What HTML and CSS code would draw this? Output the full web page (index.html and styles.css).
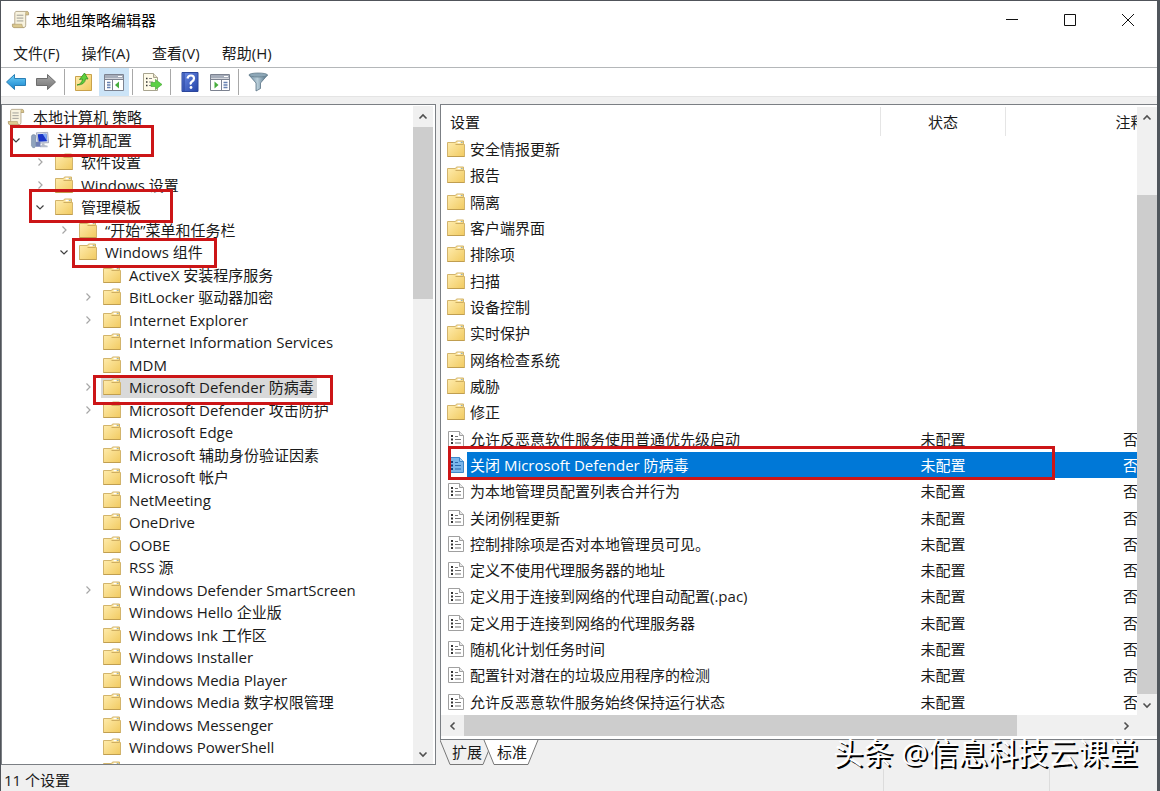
FILE: index.html
```
<!DOCTYPE html>
<html lang="zh-CN">
<head>
  <meta charset="UTF-8">
  <meta name="viewport" content="width=device-width, initial-scale=1.0">
  <title>本地组策略编辑器</title>
  <link rel="stylesheet" href="styles.css">
</head>
<body>

  <!-- shared icons -->
  <svg class="defs" width="0" height="0" aria-hidden="true">
    <defs>
      <linearGradient id="gFolder" x1="0" y1="0" x2="1" y2="1">
        <stop offset="0" stop-color="#ffedb0"/><stop offset="1" stop-color="#f1ca60"/>
      </linearGradient>
      <linearGradient id="gBlue" x1="0" y1="0" x2="0" y2="1">
        <stop offset="0" stop-color="#6fd0f8"/><stop offset="1" stop-color="#1482cc"/>
      </linearGradient>
      <linearGradient id="gGray" x1="0" y1="0" x2="0" y2="1">
        <stop offset="0" stop-color="#aaa"/><stop offset="1" stop-color="#747474"/>
      </linearGradient>
      <linearGradient id="gHelp" x1="0" y1="0" x2="1" y2="1">
        <stop offset="0" stop-color="#6b8be6"/><stop offset="1" stop-color="#2444a8"/>
      </linearGradient>
      <linearGradient id="gFunnel" x1="0" y1="0" x2="1" y2="0">
        <stop offset="0" stop-color="#6d8da3"/><stop offset=".45" stop-color="#b9ced9"/><stop offset="1" stop-color="#4c6c83"/>
      </linearGradient>
    </defs>
    <symbol id="folder" viewBox="0 0 18 18">
      <path d="M.5 2.500H8.500L9.500 1H16.500V4.500H17.500V16.500H.5Z" fill="url(#gFolder)" stroke="#d2b46c"/>
      <path d="M10.500 2.500H13.500" stroke="#fff" stroke-width="1.500"/>
      <path d="M14 2.500H15.500" stroke="#8fb3c9"/>
      <path d="M8.500 4.500H16.500" stroke="#cfae60"/>
      <path d="M.5 16.500H17.500" stroke="#c09e50"/>
    </symbol>
    <symbol id="scroll" viewBox="0 0 20 20">
      <path d="M5 1.500H16.500Q18.500 1.500 18.500 3.500V5H15.500V16Q15.500 18.500 13.500 18.500H3Q1.500 18.500 1.500 16.500V15H4V3Z" fill="#f8f3df" stroke="#b4a88c"/>
      <path d="M15.500 5V3Q15.500 1.500 17 1.500Q18.500 2 18.500 5ZM1.500 15H11.500Q11.500 18.500 13.500 18.500H3Q1.500 18 1.500 15Z" fill="#dbc990" stroke="#b4a070" stroke-width=".7"/>
      <path d="M6 5.500H13M6 8.500H13M6 11.500H13" stroke="#9a9a94"/>
    </symbol>
    <symbol id="computer" viewBox="0 0 20 20">
      <path d="M6 2L18.500 1.500L19.500 13L8 13.500Z" fill="#dfe4ee" stroke="#8a93a8" stroke-width=".8"/>
      <path d="M7.500 3.500L17 3L18 11.500L8.500 12Z" fill="#1935c8"/>
      <path d="M13 3.200L17 3L18 11.500Z" fill="#7fa8f4"/>
      <path d="M12 13.500H15V15.500L18.500 16.500V18H10V16.500L12 15.500Z" fill="#b7bdc9"/>
      <path d="M.5 6Q.5 4 3 4T5.500 6V16.500L4 18.500H2L.5 16.500Z" fill="#8fa3bd" stroke="#70819c" stroke-width=".6"/>
      <path d="M5.500 12H10.500V17.500H5.500Z" fill="#6f7fb4"/>
    </symbol>
    <symbol id="doc" viewBox="0 0 18 18">
      <path d="M1.500 1.500H12.500L16.500 5.500V16.500H1.500Z" class="doc-page"/>
      <path d="M12.500 1.500V5.500H16.500" class="doc-fold"/>
      <path d="M4 5H6V7H4ZM4 8.500H6V10.500H4ZM4 12H6V14H4Z" class="doc-dot"/>
      <path d="M8 6.500H11M8 9.500H14M8 13H14" class="doc-line"/>
    </symbol>
    <symbol id="up" viewBox="0 0 10 10"><path d="M1.500 6.500L5 3L8.500 6.500"/></symbol>
    <symbol id="down" viewBox="0 0 10 10"><path d="M1.500 3.500L5 7L8.500 3.500"/></symbol>
    <symbol id="left" viewBox="0 0 10 10"><path d="M6.500 1.500L3 5L6.500 8.500"/></symbol>
    <symbol id="right" viewBox="0 0 10 10"><path d="M3.500 1.500L7 5L3.500 8.500"/></symbol>
  </svg>

  <div class="window">
    <header class="titlebar">
      <svg class="app-icon"><use href="#scroll"/></svg>
      <h1 class="title">本地组策略编辑器</h1>
      <div class="caption">
        <button type="button" aria-label="最小化"><svg viewBox="0 0 14 14"><path d="M1 6.500H13"/></svg></button>
        <button type="button" aria-label="最大化"><svg viewBox="0 0 14 14"><path d="M1.500 1.500H12.500V12.500H1.500Z"/></svg></button>
        <button type="button" aria-label="关闭"><svg viewBox="0 0 14 14"><path d="M1 1L13 13M13 1L1 13"/></svg></button>
      </div>
    </header>

    <nav class="menubar">
      <button type="button">文件(F)</button>
      <button type="button">操作(A)</button>
      <button type="button">查看(V)</button>
      <button type="button">帮助(H)</button>
    </nav>

    <div class="toolbar">
      <button type="button" aria-label="后退"><svg viewBox="0 0 22 20"><path d="M1.500 10L9.500 2.500V6.500H20.500V13.500H9.500V17.500Z" fill="url(#gBlue)" stroke="#2b7fb5"/></svg></button>
      <button type="button" aria-label="前进"><svg viewBox="0 0 22 20"><path d="M20.500 10L12.500 2.500V6.500H1.500V13.500H12.500V17.500Z" fill="url(#gGray)" stroke="#6d6d6d"/></svg></button>
      <span class="sep"></span>
      <button type="button" aria-label="上一级"><svg viewBox="0 0 22 20"><path d="M2.500 4.500H10L12 2.500H18.500V18.500H2.500Z" fill="url(#gFolder)" stroke="#c9a24c"/><path d="M4 13Q9 12 9.500 7L6.500 7.500L11.500 1L15 7L12.500 6.800Q12 13 4 13Z" fill="#5fd03c" stroke="#2f8f24" stroke-width=".8"/></svg></button>
      <button type="button" class="active" aria-label="显示控制台树"><svg viewBox="0 0 22 20"><path d="M1.500 2.500H20.500V18.500H1.500Z" fill="#fff" stroke="#7c8290"/><path d="M2 3H20V6.500H2Z" fill="#a6adba"/><path d="M15 4.500H19" stroke="#fff"/><path d="M9.500 7V18M2 7.500H20" stroke="#7c8290"/><path d="M4 10.500H7.500M4 13H7.500M4 15.500H7.500" stroke="#6680b0" stroke-width="1.500"/><path d="M16 9.500V16.500L12 13Z" fill="#46ad3c"/></svg></button>
      <span class="sep"></span>
      <button type="button" aria-label="导出列表"><svg viewBox="0 0 22 20"><path d="M2.500 1.500H12.500L16.500 5.500V18.500H2.500Z" fill="#fffbe9" stroke="#a8a48f"/><path d="M12.500 1.500V5.500H16.500" fill="#e6e0c8" stroke="#a8a48f"/><path d="M5 6.500H6.500M5 10H6.500M5 13.500H6.500" stroke="#333" stroke-width="1.500"/><path d="M8 6.500H11M8 10H12M8 13.500H12" stroke="#888"/><path d="M10 10.500H14.500V7.500L21 12.500L14.500 17.500V14.500H10Z" fill="#5bd142" stroke="#4aa83c" stroke-width=".7"/></svg></button>
      <span class="sep"></span>
      <button type="button" aria-label="帮助"><svg viewBox="0 0 22 20"><path d="M3 .5H19V19.500H3Z" fill="url(#gHelp)" stroke="#2b469c"/><path d="M5 1V19" stroke="#26429c"/><path d="M8.500 6.500Q9 3.500 12 3.500T15 6.500Q15 8.300 13 9.500T12 12.500" fill="none" stroke="#fff" stroke-width="2.200"/><circle cx="12" cy="15.500" r="1.400" fill="#fff"/></svg></button>
      <button type="button" aria-label="显示操作窗格"><svg viewBox="0 0 22 20"><path d="M1.500 2.500H20.500V18.500H1.500Z" fill="#fff" stroke="#7c8290"/><path d="M2 3H20V6.500H2Z" fill="#a6adba"/><path d="M15 4.500H19" stroke="#fff"/><path d="M12.500 7V18M2 7.500H20" stroke="#7c8290"/><path d="M14.500 10.500H18.500M14.500 13H18.500M14.500 15.500H18.500" stroke="#6680b0" stroke-width="1.500"/><path d="M5.500 9.500V16.500L9.500 13Z" fill="#46ad3c"/></svg></button>
      <span class="sep"></span>
      <button type="button" aria-label="筛选"><svg viewBox="0 0 22 20"><path d="M2 3L9 11V19L13.500 16.500V11L20.500 3Z" fill="url(#gFunnel)" stroke="#5b7485" stroke-width=".8"/><ellipse cx="11.200" cy="3" rx="9.300" ry="2" fill="#8da7b7" stroke="#647d8d" stroke-width=".8"/></svg></button>
    </div>

    <main class="panes">
      <section class="pane tree-pane">
        <ul class="tree">
          <li class="l0"><span class="node"><svg class="icon"><use href="#scroll"/></svg>本地计算机 策略</span></li>
          <li class="l1"><svg class="chev open"><use href="#down"/></svg><span class="node"><svg class="icon"><use href="#computer"/></svg>计算机配置</span></li>
          <li class="l2"><svg class="chev"><use href="#right"/></svg><span class="node"><svg class="icon"><use href="#folder"/></svg>软件设置</span></li>
          <li class="l2"><svg class="chev"><use href="#right"/></svg><span class="node"><svg class="icon"><use href="#folder"/></svg>Windows 设置</span></li>
          <li class="l2"><svg class="chev open"><use href="#down"/></svg><span class="node"><svg class="icon"><use href="#folder"/></svg>管理模板</span></li>
          <li class="l3"><svg class="chev"><use href="#right"/></svg><span class="node"><svg class="icon"><use href="#folder"/></svg>“开始”菜单和任务栏</span></li>
          <li class="l3"><svg class="chev open"><use href="#down"/></svg><span class="node"><svg class="icon"><use href="#folder"/></svg>Windows 组件</span></li>
          <li class="l4"><span class="node"><svg class="icon"><use href="#folder"/></svg>ActiveX 安装程序服务</span></li>
          <li class="l4"><svg class="chev"><use href="#right"/></svg><span class="node"><svg class="icon"><use href="#folder"/></svg>BitLocker 驱动器加密</span></li>
          <li class="l4"><svg class="chev"><use href="#right"/></svg><span class="node"><svg class="icon"><use href="#folder"/></svg>Internet Explorer</span></li>
          <li class="l4"><span class="node"><svg class="icon"><use href="#folder"/></svg>Internet Information Services</span></li>
          <li class="l4"><span class="node"><svg class="icon"><use href="#folder"/></svg>MDM</span></li>
          <li class="l4"><svg class="chev"><use href="#right"/></svg><span class="node selected"><svg class="icon"><use href="#folder"/></svg>Microsoft Defender 防病毒</span></li>
          <li class="l4"><svg class="chev"><use href="#right"/></svg><span class="node"><svg class="icon"><use href="#folder"/></svg>Microsoft Defender 攻击防护</span></li>
          <li class="l4"><span class="node"><svg class="icon"><use href="#folder"/></svg>Microsoft Edge</span></li>
          <li class="l4"><span class="node"><svg class="icon"><use href="#folder"/></svg>Microsoft 辅助身份验证因素</span></li>
          <li class="l4"><span class="node"><svg class="icon"><use href="#folder"/></svg>Microsoft 帐户</span></li>
          <li class="l4"><span class="node"><svg class="icon"><use href="#folder"/></svg>NetMeeting</span></li>
          <li class="l4"><span class="node"><svg class="icon"><use href="#folder"/></svg>OneDrive</span></li>
          <li class="l4"><span class="node"><svg class="icon"><use href="#folder"/></svg>OOBE</span></li>
          <li class="l4"><span class="node"><svg class="icon"><use href="#folder"/></svg>RSS 源</span></li>
          <li class="l4"><svg class="chev"><use href="#right"/></svg><span class="node"><svg class="icon"><use href="#folder"/></svg>Windows Defender SmartScreen</span></li>
          <li class="l4"><span class="node"><svg class="icon"><use href="#folder"/></svg>Windows Hello 企业版</span></li>
          <li class="l4"><span class="node"><svg class="icon"><use href="#folder"/></svg>Windows Ink 工作区</span></li>
          <li class="l4"><span class="node"><svg class="icon"><use href="#folder"/></svg>Windows Installer</span></li>
          <li class="l4"><span class="node"><svg class="icon"><use href="#folder"/></svg>Windows Media Player</span></li>
          <li class="l4"><span class="node"><svg class="icon"><use href="#folder"/></svg>Windows Media 数字权限管理</span></li>
          <li class="l4"><span class="node"><svg class="icon"><use href="#folder"/></svg>Windows Messenger</span></li>
          <li class="l4"><span class="node"><svg class="icon"><use href="#folder"/></svg>Windows PowerShell</span></li>
          <li class="l4"><span class="node"><svg class="icon"><use href="#folder"/></svg></span></li>
        </ul>
        <div class="vscroll">
          <button type="button" aria-label="向上滚动"><svg><use href="#up"/></svg></button>
          <div class="track"><div class="thumb"></div></div>
          <button type="button" aria-label="向下滚动"><svg><use href="#down"/></svg></button>
        </div>
        <span class="mark mark-computer"></span>
        <span class="mark mark-templates"></span>
        <span class="mark mark-components"></span>
        <span class="mark mark-defender"></span>
      </section>

      <div class="right">
        <section class="pane list-pane">
          <div class="list-row">
            <div class="list">
              <table>
                <colgroup><col><col class="col-state"><col class="col-note"></colgroup>
                <thead>
                  <tr><th>设置</th><th>状态</th><th>注释</th></tr>
                </thead>
                <tbody>
                  <tr><td><svg class="icon"><use href="#folder"/></svg>安全情报更新</td><td></td><td></td></tr>
                  <tr><td><svg class="icon"><use href="#folder"/></svg>报告</td><td></td><td></td></tr>
                  <tr><td><svg class="icon"><use href="#folder"/></svg>隔离</td><td></td><td></td></tr>
                  <tr><td><svg class="icon"><use href="#folder"/></svg>客户端界面</td><td></td><td></td></tr>
                  <tr><td><svg class="icon"><use href="#folder"/></svg>排除项</td><td></td><td></td></tr>
                  <tr><td><svg class="icon"><use href="#folder"/></svg>扫描</td><td></td><td></td></tr>
                  <tr><td><svg class="icon"><use href="#folder"/></svg>设备控制</td><td></td><td></td></tr>
                  <tr><td><svg class="icon"><use href="#folder"/></svg>实时保护</td><td></td><td></td></tr>
                  <tr><td><svg class="icon"><use href="#folder"/></svg>网络检查系统</td><td></td><td></td></tr>
                  <tr><td><svg class="icon"><use href="#folder"/></svg>威胁</td><td></td><td></td></tr>
                  <tr><td><svg class="icon"><use href="#folder"/></svg>修正</td><td></td><td></td></tr>
                  <tr><td><svg class="icon"><use href="#doc"/></svg>允许反恶意软件服务使用普通优先级启动</td><td>未配置</td><td>否</td></tr>
                  <tr class="selected"><td><svg class="icon"><use href="#doc"/></svg>关闭 Microsoft Defender 防病毒</td><td>未配置</td><td>否</td></tr>
                  <tr><td><svg class="icon"><use href="#doc"/></svg>为本地管理员配置列表合并行为</td><td>未配置</td><td>否</td></tr>
                  <tr><td><svg class="icon"><use href="#doc"/></svg>关闭例程更新</td><td>未配置</td><td>否</td></tr>
                  <tr><td><svg class="icon"><use href="#doc"/></svg>控制排除项是否对本地管理员可见。</td><td>未配置</td><td>否</td></tr>
                  <tr><td><svg class="icon"><use href="#doc"/></svg>定义不使用代理服务器的地址</td><td>未配置</td><td>否</td></tr>
                  <tr><td><svg class="icon"><use href="#doc"/></svg>定义用于连接到网络的代理自动配置(.pac)</td><td>未配置</td><td>否</td></tr>
                  <tr><td><svg class="icon"><use href="#doc"/></svg>定义用于连接到网络的代理服务器</td><td>未配置</td><td>否</td></tr>
                  <tr><td><svg class="icon"><use href="#doc"/></svg>随机化计划任务时间</td><td>未配置</td><td>否</td></tr>
                  <tr><td><svg class="icon"><use href="#doc"/></svg>配置针对潜在的垃圾应用程序的检测</td><td>未配置</td><td>否</td></tr>
                  <tr><td><svg class="icon"><use href="#doc"/></svg>允许反恶意软件服务始终保持运行状态</td><td>未配置</td><td>否</td></tr>
                </tbody>
              </table>
              <span class="mark mark-setting"></span>
            </div>
            <div class="vscroll">
              <button type="button" aria-label="向上滚动"><svg><use href="#up"/></svg></button>
              <div class="track"><div class="thumb"></div></div>
              <button type="button" aria-label="向下滚动"><svg><use href="#down"/></svg></button>
            </div>
          </div>
          <div class="hscroll">
            <button type="button" aria-label="向左滚动"><svg><use href="#left"/></svg></button>
            <div class="track"><div class="thumb"></div></div>
            <button type="button" aria-label="向右滚动"><svg><use href="#right"/></svg></button>
          </div>
        </section>
        <div class="tabs">
          <svg class="tab-shapes" viewBox="0 0 100 26"><path d="M0 0L10 24.500H43L53 0" fill="#f0f0f0"/><path d="M44 0L54 24.500H88L98 0" fill="#fff"/></svg>
          <button type="button">扩展</button>
          <button type="button">标准</button>
        </div>
      </div>
    </main>

    <footer class="statusbar">
      <span class="status-text">11 个设置</span>
      <span class="status-cell"></span>
      <span class="status-cell last"></span>
    </footer>

    <div class="watermark">头条 @信息科技云课堂</div>
  </div>

</body>
</html>
```
FILE: styles.css
```
* { box-sizing: border-box; }
body { margin: 0; background: #f0f0f0; color: #1a1a1a; font: 15px/22px "Open Sans", "Noto Sans CJK SC", sans-serif; }
button { margin: 0; padding: 0; border: 0; background: none; color: inherit; font: inherit; }
.defs { position: absolute; }

.window { position: relative; display: flex; flex-direction: column; height: 100vh; overflow: hidden; border: 1px solid #50545a; border-right: 3px solid #50565c; border-bottom: 0; }

/* title bar */
.titlebar { display: flex; align-items: center; height: 37px; padding-left: 10px; background: #fff; }
.app-icon { width: 19px; height: 19px; }
.title { flex: 1; margin: 0 0 0 6px; font-size: 15px; line-height: 22px; font-weight: 400; color: #000; }
.caption { display: flex; }
.caption button { width: 58px; height: 37px; }
.caption svg { display: block; width: 14px; height: 14px; margin: auto; fill: none; stroke: #111; }

/* menu and toolbar */
.menubar { display: flex; gap: 22px; height: 30px; padding: 0 12px; background: #fff; border-bottom: 1px solid #b4b7b9; }
.toolbar { display: flex; align-items: center; height: 29px; background: #fff; border-bottom: 1px solid #e4e4e4; }
.toolbar button { width: 30px; height: 28px; }
.toolbar svg { display: block; width: 22px; height: 20px; margin: auto; }
.toolbar .active { background: #cce4f7; }
.sep { width: 1px; height: 26px; margin: 0 4px 0 3px; background: #a8a8a8; }

/* panes */
.panes { display: flex; flex: 1; gap: 4px; min-height: 0; padding-top: 7px; }
.pane { position: relative; background: #fff; border: 1px solid #7b7f84; }
.tree-pane { display: flex; width: 435px; padding: 1px 2px 0 0; overflow: hidden; }
.right { display: flex; flex: 1; flex-direction: column; min-width: 0; }
.list-pane { display: flex; flex: 1; flex-direction: column; min-height: 0; padding: 2px 0 3px; border-right: 0; }

/* tree */
.tree { flex: 1; min-width: 0; margin: 0; padding: 0; list-style: none; overflow: hidden; white-space: nowrap; }
.tree li { display: flex; align-items: center; height: 22px; }
.tree li:nth-child(even) { height: 23px; }
.l0 { padding-left: 3px; }
.l1 { padding-left: 27px; }
.l2 { padding-left: 51px; }
.l3 { padding-left: 75px; }
.l4 { padding-left: 99px; }
.node { display: flex; align-items: center; gap: 7px; padding: 0 3px 0 1px; }
.tree .icon { flex: none; width: 20px; height: 18px; }
.chev { width: 10px; height: 10px; margin: 0 8px 0 -18px; fill: none; stroke: #a6a6a6; stroke-width: 1.2; }
.chev.open { stroke: #404040; }
.node.selected { background: #d9d9d9; }

/* scroll bars */
.vscroll { display: flex; flex-direction: column; width: 20px; background: #f0f0f0; }
.vscroll button { height: 21px; }
.hscroll { display: flex; height: 21px; padding-right: 20px; background: #f0f0f0; }
.hscroll button { width: 23px; }
.vscroll svg, .hscroll svg { display: block; width: 10px; height: 10px; margin: auto; fill: none; stroke: #505050; stroke-width: 1.6; }
.track { flex: 1; }
.thumb { background: #cdcdcd; }
.tree-pane .thumb { height: 28%; }
.list-pane .vscroll .track { padding-top: 67px; }
.list-pane .vscroll .thumb { height: 100%; }
.hscroll .thumb { width: 85%; height: 100%; }

/* settings list */
.list-row { display: flex; flex: 1; min-height: 0; }
.list { position: relative; flex: 1; min-width: 0; overflow: hidden; }
table { width: calc(100% + 119px); height: 100%; border-collapse: collapse; table-layout: fixed; }
.col-state { width: 125px; }
.col-note { width: 250px; }
th, td { padding: 0; text-align: center; font-weight: 400; white-space: nowrap; }
th { height: 29px; border-right: 1px solid #e5e5e5; }
th:first-child { padding-left: 9px; text-align: left; }
td:first-child { padding-left: 6px; text-align: left; }
td .icon { width: 18px; height: 18px; margin-right: 5px; vertical-align: -3px; }
tr.selected { color: #fff; }
tr.selected td { background: #0078d7; }
tr.selected td:first-child { background: linear-gradient(to right, #fff 26px, #0078d7 26px); }
.doc-page { fill: var(--page, #fff); stroke: var(--edge, #a0a0a0); }
.doc-fold { fill: var(--fold, #e8e8e8); stroke: var(--edge, #a0a0a0); }
.doc-dot { fill: var(--dot, #333); }
.doc-line { stroke: var(--rule, #777); }
tr.selected .icon { --page: #7ab6ea; --edge: #3c86c8; --fold: #a8d0f2; --dot: #123f7c; --rule: #2b68ac; }

/* sheet tabs */
.tabs { position: relative; display: flex; height: 25px; padding-left: 12px; gap: 15px; }
.tabs button { position: relative; height: 24px; }
.tab-shapes { position: absolute; left: 0; top: 0; width: 100px; height: 26px; stroke: #777; }

/* status bar */
.statusbar { display: flex; height: 26px; padding: 4px 0 0 3px; }
.status-text { flex: 1; }
.status-cell { width: 166px; height: 22px; border-left: 1px solid #dcdcdc; }
.status-cell.last { width: 108px; }

/* red call-out frames over the rows */
.mark { position: absolute; border: 3px solid #cc1517; pointer-events: none; }
.mark-computer { left: 8px; top: 20px; width: 144px; height: 32px; }
.mark-templates { left: 27px; top: 84px; width: 144px; height: 34px; }
.mark-components { left: 70px; top: 133px; width: 145px; height: 30px; }
.mark-defender { left: 91px; top: 270px; width: 240px; height: 30px; }
.mark-setting { left: 7px; top: 339px; width: 607px; height: 34px; }

.watermark { position: absolute; right: 19px; bottom: 16px; color: #fff; font-size: 30px; line-height: 44px; text-shadow: 2px 2px 0 #000; }
```
